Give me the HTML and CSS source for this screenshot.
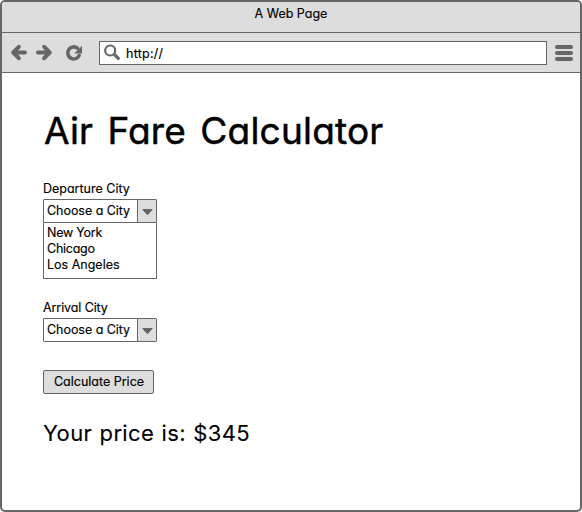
FILE: index.html
```
<!DOCTYPE html>
<html lang="en">
<head>
<meta charset="utf-8">
<title>A Web Page</title>
<link rel="stylesheet" href="styles.css">
</head>
<body>
<div class="browser">
  <header class="titlebar"><span class="title">A Web Page</span></header>
  <nav class="toolbar">
    <svg class="nav-icons" width="97" height="39" viewBox="2 33 97 39" fill="none" stroke="#666" stroke-width="4" stroke-linecap="round" stroke-linejoin="round">
      <path d="M18.800 46.800l-5.600 5.700 5.600 5.700M14 52.500H25"/>
      <path d="M44.200 46.800l5.600 5.700-5.600 5.700M49 52.500H38"/>
      <path d="M77.500 48.200A6 6 0 1 0 79.200 55.500" stroke-width="3.600"/>
      <path d="M82 45.800V53.500H74.300Z" fill="#666" stroke="none"/>
    </svg>
    <div class="address">
      <svg width="18" height="18" viewBox="0 0 18 18" fill="none" stroke="#666" stroke-linecap="round">
        <circle cx="6.200" cy="6.500" r="5" stroke-width="2.200"/>
        <path d="M10.800 10.800L14.300 14.300" stroke-width="3.200"/>
      </svg>
      <span class="url">http://</span>
    </div>
    <div class="menu"><i></i><i></i><i></i></div>
  </nav>
  <main class="content">
    <h1><span class="heading">Air Fare Calculator</span></h1>
    <div class="field departure">
      <div class="label dep">Departure City</div>
      <div class="select">
        <span class="value">Choose a City</span>
        <span class="drop"><svg width="11" height="6" viewBox="0 0 11 6"><path d="M.8.5H10.200L6.100 5.200Q5.500 5.800 4.900 5.200Z" fill="#666" stroke="#666" stroke-linejoin="round"/></svg></span>
      </div>
      <ul class="options">
        <li class="short">New York</li>
        <li class="short">Chicago</li>
        <li>Los Angeles</li>
      </ul>
    </div>
    <div class="field arrival">
      <div class="label arr">Arrival City</div>
      <div class="select">
        <span class="value">Choose a City</span>
        <span class="drop"><svg width="11" height="6" viewBox="0 0 11 6"><path d="M.8.5H10.200L6.100 5.200Q5.500 5.800 4.900 5.200Z" fill="#666" stroke="#666" stroke-linejoin="round"/></svg></span>
      </div>
    </div>
    <button class="calculate">Calculate Price</button>
    <p class="result">Your price is: $345</p>
  </main>
</div>
</body>
</html>
```
FILE: styles.css
```
* { box-sizing: border-box; }
body {
  margin: 0;
  background: #fff;
  color: #000;
  font: 12.5px/16px Inter, "Liberation Sans", sans-serif;
  font-feature-settings: "cv11";
  -webkit-text-stroke: .15px #000;
}
svg { display: block; }
.browser {
  height: 512px;
  border: 2px solid #666;
  border-radius: 5px;
  overflow: hidden;
}
.titlebar {
  height: 31px;
  padding-top: 4px;
  background: #ddd;
  border-bottom: 1px solid #666;
  text-align: center;
}
.toolbar {
  display: flex;
  height: 40px;
  background: #ddd;
  border-bottom: 1px solid #666;
}
.nav-icons { flex: none; }
.address {
  display: flex;
  align-items: center;
  width: 448px;
  height: 24px;
  margin-top: 8px;
  padding-left: 4px;
  background: #fff;
  border: 1px solid #666;
}
.url { margin: 1px 0 0 4px; letter-spacing: .25px; }
.menu {
  display: flex;
  flex-direction: column;
  gap: 2px;
  margin: 12px 0 0 8px;
}
.menu i {
  width: 18px;
  height: 4px;
  border-radius: 2px;
  background: #666;
}
.content { padding: 36px 0 0 41px; }
h1 {
  margin: 0;
  height: 72px;
  font-size: 37px;
  font-weight: 400;
  line-height: 44px;
  padding-left: 1px;
  letter-spacing: .2px;
  word-spacing: 3.6px;
  -webkit-text-stroke: .5px #000;
}
.field { height: 119px; }
.label { height: 18px; }
.arr { letter-spacing: -.1px; }
.select {
  display: flex;
  width: 114px;
  height: 24px;
  border: 1px solid #666;
  border-radius: 1px;
}
.value { flex: 1; padding: 3px 0 0 3px; white-space: nowrap; letter-spacing: -.04px; }
.drop {
  display: flex;
  flex: none;
  align-items: center;
  justify-content: center;
  padding-top: 2px;
  width: 19px;
  background: #ddd;
  border-left: 1px solid #666;
}
.options {
  width: 114px;
  height: 56px;
  margin: 0;
  padding: 2px 3px;
  list-style: none;
  border: 1px solid #666;
  border-top: 0;
}
.short { letter-spacing: -.25px; }
.arrival { height: 70px; }
.calculate {
  display: block;
  width: 111px;
  height: 24px;
  padding: 0 0 0 1px;
  border: 1px solid #666;
  border-radius: 2px;
  background: #ddd;
  color: #000;
  font: inherit;
  font-feature-settings: inherit;
  white-space: nowrap;
}
.result {
  margin: 25px 0 0 0;
  font-size: 22px;
  line-height: 28px;
  letter-spacing: .35px;
  word-spacing: .9px;
  -webkit-text-stroke: .1px #000;
}
```
